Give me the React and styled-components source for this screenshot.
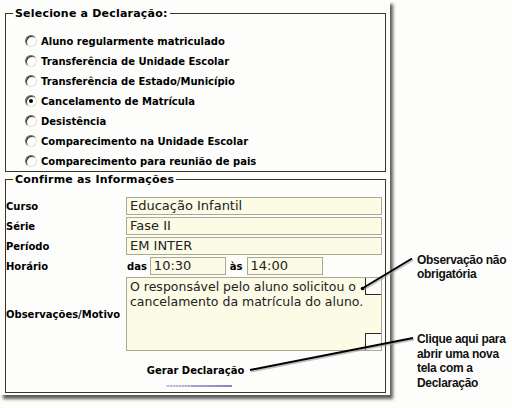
import styled, { createGlobalStyle } from 'styled-components'

const GlobalStyle = createGlobalStyle`
  html, body {
    margin: 0;
    background: #fdfefc;
  }
  body {
    font-family: "DejaVu Sans", Verdana, sans-serif;
    color: #000;
  }
`

const Page = styled.div`
  position: relative;
  width: 512px;
  height: 408px;
  display: flex;
  align-items: flex-start;
  overflow: hidden;
`
const Panel = styled.div`
  width: 390px;
  flex-shrink: 0;
  box-sizing: border-box;
  padding: 7px 4px 2px 5px;
  background: #fdfefc;
  box-shadow: 3px 4px 3px rgba(40, 40, 40, 0.75);
`
const Group = styled.fieldset`
  margin: ${p => (p.$gap ? '1px 0 0' : '0')};
  padding: 0;
  min-width: 0;
  border: 1px solid #3b3522;
`
const Legend = styled.legend`
  margin-left: 7px;
  padding: 0 2px;
  font-size: 11px;
  line-height: 13px;
  font-weight: bold;
  letter-spacing: 0.2px;
`
const RadioList = styled.div`
  display: flex;
  flex-direction: column;
  padding: 11px 0 0 19px;
`
const RadioRow = styled.label`
  height: 20px;
  display: flex;
  align-items: center;
  gap: 4px;
  font-size: 10px;
  font-weight: bold;
`
const Radio = styled.span`
  width: 12px;
  height: 12px;
  box-sizing: border-box;
  border-radius: 50%;
  border: 1px solid;
  border-color: #6c6c64 #e0e0d8 #e0e0d8 #6c6c64;
  box-shadow: inset 1px 1px 0 #30302c;
  background: #fff;
  display: flex;
  align-items: center;
  justify-content: center;
  &::after {
    content: '';
    width: 4px;
    height: 4px;
    border-radius: 50%;
    background: #000;
    display: ${p => (p.$checked ? 'block' : 'none')};
  }
`
const FormGrid = styled.div`
  display: grid;
  grid-template-columns: 120px 1fr;
  grid-auto-rows: 20px;
  align-items: center;
  padding-top: 10px;
`
const Label = styled.div`
  font-size: 10px;
  font-weight: bold;
`
const Field = styled.div`
  width: ${p => p.$w || 256}px;
  height: 18px;
  box-sizing: border-box;
  border: 1px solid #aaa994;
  background: #fbfbe6;
  padding: 0 3px;
  font-size: 13px;
  line-height: 16px;
  color: #222;
  white-space: nowrap;
  overflow: hidden;
`
const TimeRow = styled.div`
  display: flex;
  align-items: center;
  padding-left: 1px;
`
const TimeWord = styled.span`
  font-size: 10px;
  font-weight: bold;
  margin-right: ${p => p.$mr}px;
  margin-left: ${p => p.$ml || 0}px;
`
const TextBox = styled.div`
  grid-row: span 4;
  margin-top: 1px;
  width: 256px;
  height: 74px;
  box-sizing: border-box;
  border: 1px solid #aaa994;
  background: #fbfbe6;
  display: flex;
  align-self: start;
`
const TextContent = styled.div`
  flex: 1;
  min-width: 0;
  padding: 1px 0 0 3px;
  font-size: 12.5px;
  line-height: 15px;
  color: #222;
  white-space: nowrap;
  overflow: hidden;
`
const ScrollTrack = styled.div`
  width: 16px;
  flex-shrink: 0;
  display: flex;
  flex-direction: column;
  justify-content: space-between;
`
const ScrollButton = styled.div`
  height: 16px;
  background: #fdfdf8;
  border-left: 1px solid #2a2a24;
  ${p => (p.$up ? 'border-bottom' : 'border-top')}: 1px solid #2a2a24;
`
const TallLabel = styled(Label)`
  grid-row: span 4;
  align-self: center;
  margin-top: -3px;
`
const ButtonArea = styled.div`
  display: flex;
  flex-direction: column;
  align-items: center;
  padding: 8px 0 5px;
`
const GenerateButton = styled.span`
  font-size: 10px;
  font-weight: bold;
  line-height: 14px;
  cursor: pointer;
`
const ButtonBar = styled.div`
  width: 66px;
  height: 2px;
  margin: 7px 0 0 6px;
  background:
    repeating-linear-gradient(to right, rgba(253, 254, 252, 0.5) 0 1px, transparent 1px 3px) 0 0 / 40% 100% no-repeat,
    linear-gradient(to right, #c4c4d8, #a4a4d2 40%, #8484c4);
`
const Notes = styled.div`
  display: flex;
  flex-direction: column;
  margin-left: 27px;
  padding-top: 253px;
  white-space: nowrap;
`
const Note = styled.div`
  font-family: "Liberation Sans", Arial, sans-serif;
  font-size: 12px;
  font-weight: bold;
  letter-spacing: -0.3px;
  line-height: ${p => p.$lh || 14}px;
  color: #111;
  margin-top: ${p => p.$mt || 0}px;
`
const Callouts = styled.svg`
  position: absolute;
  left: 0;
  top: 0;
  pointer-events: none;
`

const options = [
  'Aluno regularmente matriculado',
  'Transferência de Unidade Escolar',
  'Transferência de Estado/Município',
  'Cancelamento de Matrícula',
  'Desistência',
  'Comparecimento na Unidade Escolar',
  'Comparecimento para reunião de pais',
]

const fields = [
  ['Curso', 'Educação Infantil'],
  ['Série', 'Fase II'],
  ['Período', 'EM INTER'],
]

function App() {
  return (
    <Page>
      <GlobalStyle />
      <Panel>
        <Group>
          <Legend>Selecione a Declaração:</Legend>
          <RadioList>
            {options.map((o, i) => (
              <RadioRow key={o}>
                <Radio $checked={i === 3} />
                {o}
              </RadioRow>
            ))}
          </RadioList>
        </Group>
        <Group $gap>
          <Legend>Confirme as Informações</Legend>
          <FormGrid>
            {fields.map(([l, v]) => [
              <Label key={l}>{l}</Label>,
              <Field key={l + 'v'}>{v}</Field>,
            ])}
            <Label>Horário</Label>
            <TimeRow>
              <TimeWord $mr={3}>das</TimeWord>
              <Field $w={76}>10:30</Field>
              <TimeWord $ml={4} $mr={4}>às</TimeWord>
              <Field $w={76}>14:00</Field>
            </TimeRow>
            <TallLabel>Observações/Motivo</TallLabel>
            <TextBox>
              <TextContent>
                O responsável pelo aluno solicitou o<br />
                cancelamento da matrícula do aluno.
              </TextContent>
              <ScrollTrack>
                <ScrollButton $up />
                <ScrollButton />
              </ScrollTrack>
            </TextBox>
          </FormGrid>
          <ButtonArea>
            <GenerateButton>Gerar Declaração</GenerateButton>
            <ButtonBar />
          </ButtonArea>
        </Group>
      </Panel>
      <Notes>
        <Note>
          Observação não<br />obrigatória
        </Note>
        <Note $mt={51} $lh={14.5}>
          Clique aqui para<br />abrir uma nova<br />tela com a<br />Declaração
        </Note>
      </Notes>
      <Callouts width="512" height="408" viewBox="0 0 512 408">
        <g stroke="#9a9a9a" strokeWidth="2" opacity="0.6">
          <line x1="363" y1="290" x2="413" y2="260" />
          <line x1="251" y1="371.5" x2="414" y2="339.5" />
        </g>
        <g stroke="#000" strokeWidth="2">
          <line x1="363" y1="288" x2="412" y2="258.5" />
          <line x1="250" y1="370" x2="413" y2="338" />
        </g>
        <circle cx="362.5" cy="288.5" r="1.8" fill="#000" />
      </Callouts>
    </Page>
  )
}

export default App
